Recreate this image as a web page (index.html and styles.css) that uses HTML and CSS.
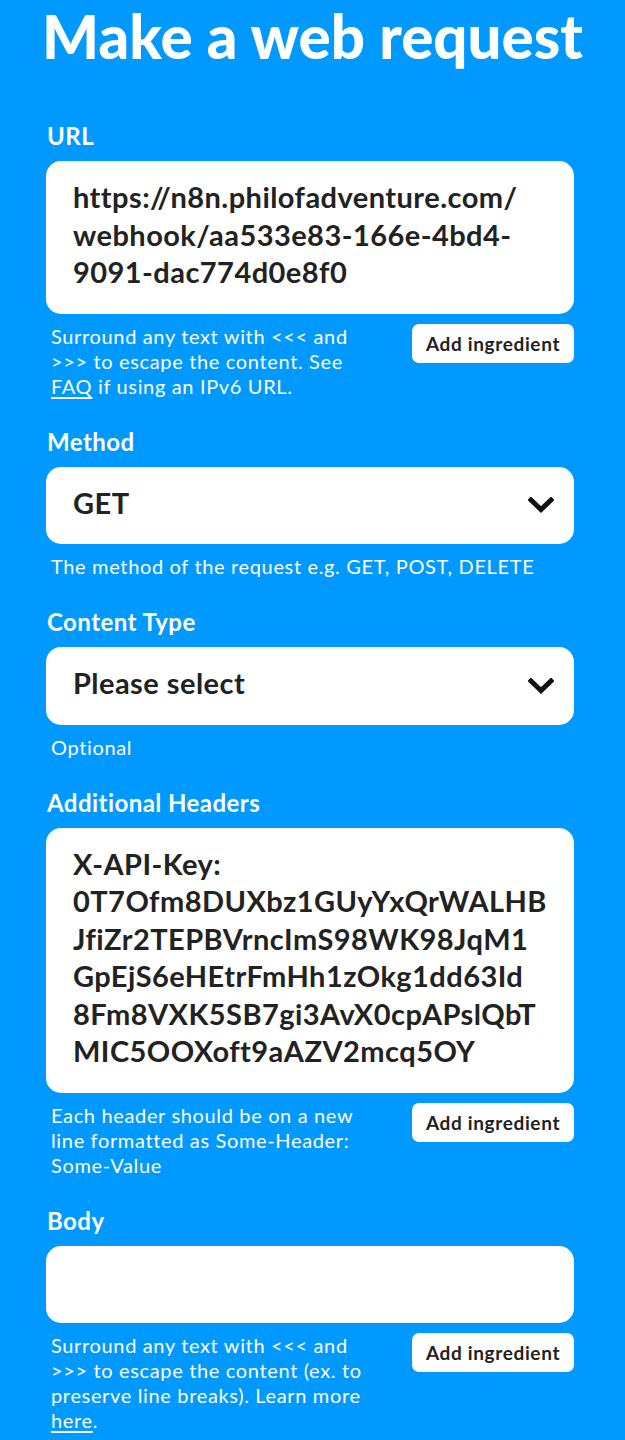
FILE: index.html
```html
<!DOCTYPE html>
<html lang="en">
<head>
<meta charset="utf-8">
<title>Make a web request</title>
<link rel="stylesheet" href="styles.css">
</head>
<body>
<main class="page">
  <h1 class="title">Make a web request</h1>

  <div class="form">
    <section class="field">
      <label class="label">URL</label>
      <div class="box">https://n8n.philofadventure.com/<br>webhook/aa533e83-166e-4bd4-<br>9091-dac774d0e8f0</div>
      <div class="help-row">
        <p class="help">Surround any text with &lt;&lt;&lt; and<br>&gt;&gt;&gt; to escape the content. See<br><a class="link" href="#">FAQ</a> if using an IPv6 URL.</p>
        <button class="ingredient">Add ingredient</button>
      </div>
    </section>

    <section class="field">
      <label class="label">Method</label>
      <div class="box select">
        <span>GET</span>
        <svg class="chevron" width="26" height="16" viewBox="0 0 26 16"><polyline points="3,3 13,12.5 23,3" fill="none" stroke="#111" stroke-width="5" stroke-linecap="square"/></svg>
      </div>
      <p class="help help-single">The method of the request e.g. GET, POST, DELETE</p>
    </section>

    <section class="field">
      <label class="label">Content Type</label>
      <div class="box select">
        <span>Please select</span>
        <svg class="chevron" width="26" height="16" viewBox="0 0 26 16"><polyline points="3,3 13,12.5 23,3" fill="none" stroke="#111" stroke-width="5" stroke-linecap="square"/></svg>
      </div>
      <p class="help help-single">Optional</p>
    </section>

    <section class="field">
      <label class="label">Additional Headers</label>
      <div class="box">X-API-Key:<br>0T7Ofm8DUXbz1GUyYxQrWALHB<br>JfiZr2TEPBVrncImS98WK98JqM1<br>GpEjS6eHEtrFmHh1zOkg1dd63Id<br>8Fm8VXK5SB7gi3AvX0cpAPslQbT<br>MIC5OOXoft9aAZV2mcq5OY</div>
      <div class="help-row">
        <p class="help">Each header should be on a new<br>line formatted as Some-Header:<br>Some-Value</p>
        <button class="ingredient">Add ingredient</button>
      </div>
    </section>

    <section class="field">
      <label class="label">Body</label>
      <div class="box empty"></div>
      <div class="help-row">
        <p class="help">Surround any text with &lt;&lt;&lt; and<br>&gt;&gt;&gt; to escape the content (ex. to<br>preserve line breaks). Learn more<br><a class="link" href="#">here</a>.</p>
        <button class="ingredient">Add ingredient</button>
      </div>
    </section>
  </div>
</main>
</body>
</html>
```
FILE: styles.css
```css
* { box-sizing: border-box; }

html, body {
  margin: 0;
  padding: 0;
  background: #0099ff;
}

body {
  font-family: Lato, "Liberation Sans", sans-serif;
  color: #fff;
}

.page {
  padding: 0;
}

.title {
  margin: 0 0 49px;
  font-size: 60px;
  line-height: 72px;
  font-weight: 900;
  text-align: center;
  white-space: nowrap;
  color: #fff;
}

.form {
  padding: 0 51px 0 46px;
}

.field {
  display: flex;
  flex-direction: column;
  margin-bottom: 28px;
}

.field:last-child {
  margin-bottom: 0;
}

.label {
  display: block;
  font-size: 24px;
  line-height: 30px;
  font-weight: 700;
  letter-spacing: 0.45px;
  margin: 0 0 10px 1px;
}

.box {
  background: #fff;
  color: #222;
  border-radius: 15px;
  padding: 17px 27px 23px;
  font-size: 29px;
  line-height: 37.5px;
  font-weight: 700;
  letter-spacing: 0.45px;
}

.box.empty {
  min-height: 77px;
}

.select {
  display: flex;
  align-items: center;
  justify-content: space-between;
  padding-right: 20px;
}

.chevron {
  display: block;
  flex: none;
  margin-top: 6px;
}

.help-row {
  display: flex;
  justify-content: space-between;
  align-items: flex-start;
  margin-top: 10px;
}

.help {
  margin: 0 0 0 5px;
  font-size: 20px;
  line-height: 25px;
  font-weight: 400;
  letter-spacing: 0.65px;
}

.help-single {
  margin-top: 10px;
}

.link {
  color: #fff;
  text-decoration: underline;
  text-underline-offset: 3px;
}

.ingredient {
  flex: none;
  width: 162px;
  height: 39px;
  border: 0;
  border-radius: 7px;
  background: #fff;
  color: #222;
  font-family: Lato, "Liberation Sans", sans-serif;
  font-size: 19px;
  font-weight: 700;
  letter-spacing: 0.65px;
  padding: 0;
  cursor: pointer;
}
```
